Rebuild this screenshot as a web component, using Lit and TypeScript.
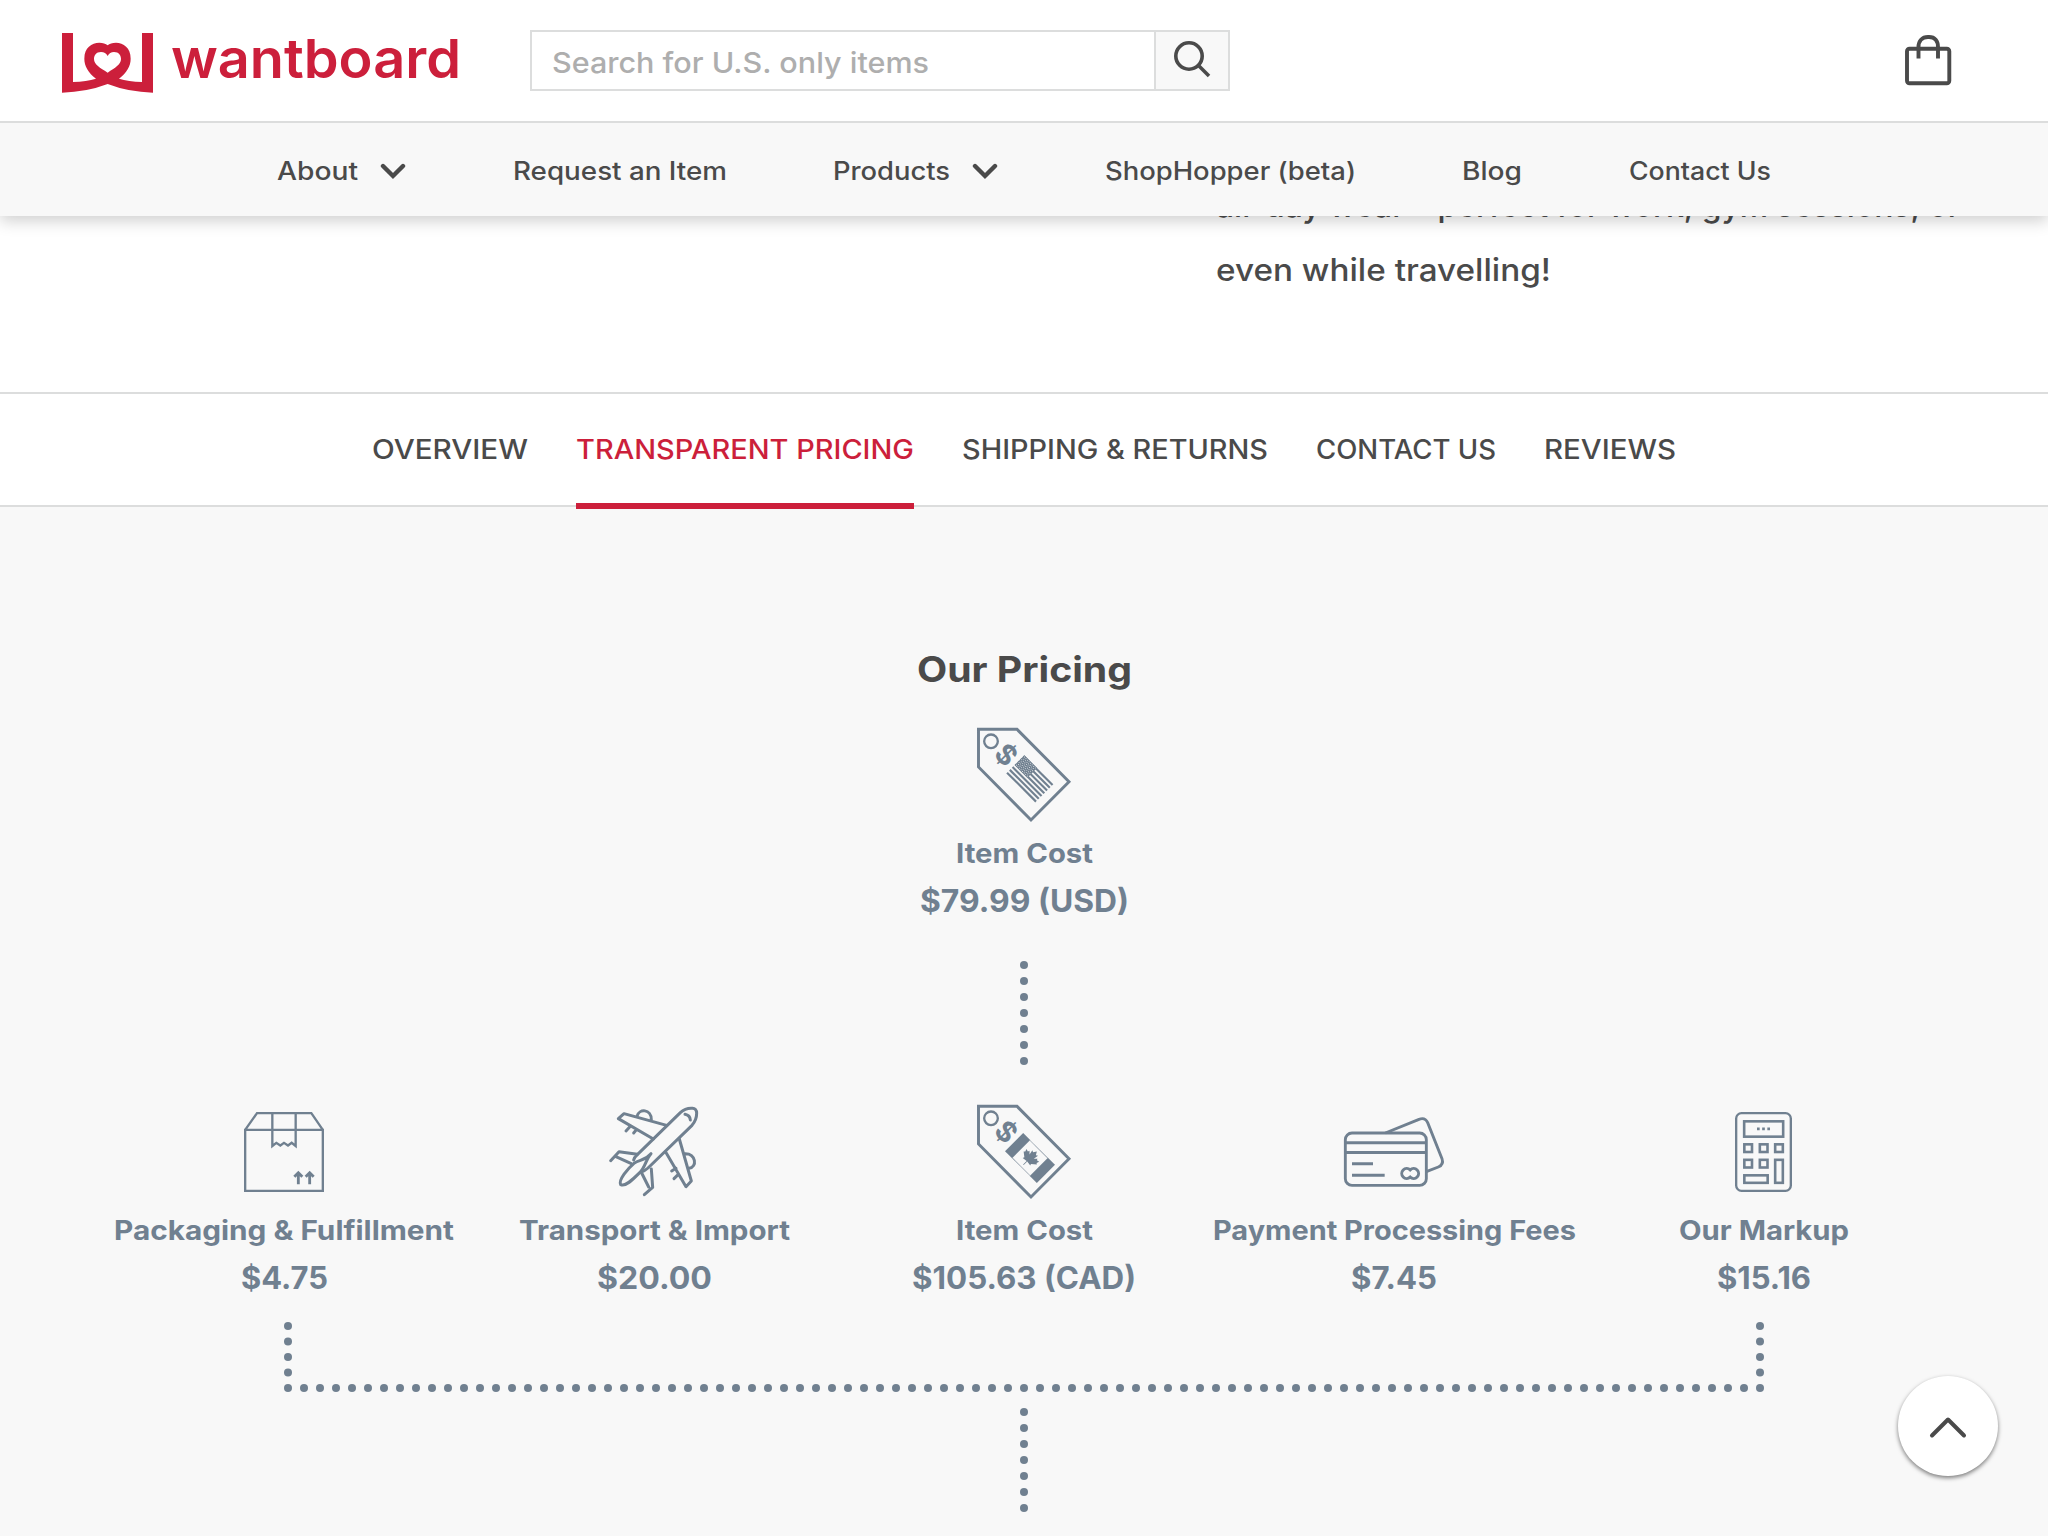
import { LitElement, html, svg, css } from "lit";
import { customElement, property } from "lit/decorators.js";

/** One line of text set to an exact measure. */
@customElement("wb-text")
class WbText extends LitElement {
  @property() text = "";
  @property({ type: Number }) measure = 100;
  @property({ type: Number }) size = 24;
  @property({ type: Number }) weight = 500;
  @property({ type: Number }) line = 48;
  @property({ type: Number }) base = 34;

  static styles = css`
    :host { display: block; flex: none; }
    .line { display: block; overflow: visible; }
    .glyphs { font-family: Inter, "Liberation Sans", sans-serif; fill: currentColor; }
  `;

  render() {
    return html`<svg class="line" width=${this.measure} height=${this.line}>
      <text class="glyphs" x="0" y=${this.base} font-size=${this.size} font-weight=${this.weight}
        textLength=${this.measure} lengthAdjust="spacingAndGlyphs">${this.text}</text>
    </svg>`;
  }
}

const tag = svg`
  <path d="M235.5 298H351L507 455L393 570L235.5 411Z" stroke-width="8.8"/>
  <circle cx="273" cy="334" r="20.5" stroke-width="7"/>
  <text class="dollar" transform="translate(319 374) rotate(45)" x="0" y="30" text-anchor="middle">$</text>`;

const stars = [0, 1, 2, 3, 4, 5, 6].flatMap((r) =>
  [0, 1, 2, 3, 4, 5, 6, 7].map((c) => [4 + c * 6.6 + (r % 2) * 3.3, 3.5 + r * 5.7]).filter(([x]) => x < 52)
);

const icons: Record<string, { box: string; art: unknown }> = {
  usd: {
    box: "192 291 360 288",
    art: svg`${tag}
      <g transform="translate(373 376) rotate(45)" class="solid">
        ${[0, 1, 2, 3, 4, 5, 6].map((i) => svg`<rect x="0" y=${i * 11.7} width="123" height="6.4"/>`)}
        <rect x="0" y="0" width="54" height="41"/>
        ${stars.map(([x, y]) => svg`<circle class="hole" cx=${x} cy=${y} r="1.4"/>`)}
      </g>`,
  },
  cad: {
    box: "192 291 360 288",
    art: svg`${tag}
      <g transform="translate(369.5 378) rotate(45)" class="solid">
        <rect x="0" y="0" width="30" height="77"/>
        <rect x="105" y="0" width="30" height="77"/>
        <rect x="30" y="0.5" width="75" height="1.6"/>
        <rect x="30" y="75" width="75" height="1.6"/>
        <path transform="translate(68 37)" d="M0-27L6-17L12-20L9-5L17-13L19-8L27-10L24-2L28 1L14 12L16 17L1.2 15L1.2 30H-1.2L-1.2 15L-16 17L-14 12L-28 1L-24-2L-27-10L-19-8L-17-13L-9-5L-12-20L-6-17Z"/>
      </g>`,
  },
  box: {
    box: "372 42 360 288",
    art: svg`<path stroke-width="7" d="M435.5 119.5H668.5V302.5H435.5ZL471 69.5H634L668.5 119.5M517 70V168L529 158.5L541 166.5L552 158.5L564 166.5L575 158.5L587 168V70"/>
      <path stroke-width="8.5" d="M595 283V248M583 260L595 248L607 260M629 283V248M617 260L629 248L641 260"/>`,
  },
  plane: {
    box: "282 42 360 288",
    art: svg`<g stroke-width="9" stroke-linecap="round" stroke-linejoin="round">
      <path d="M401 210Q402 203 412 194L541 68Q556 54 576 55Q590 54 590 70Q590 90 576 106L444 234Q434 243 424 246"/>
      <path d="M555 73Q570 76 571 90"/>
      <path d="M500 106L372 71L355 86L460 147M411 79C417 55 454 56 454 89M391 109L378 123M410 118L401 129"/>
      <path d="M538 147L574 273L558 290L497 186M555 191C588 190 593 232 567 235M528 235L515 243M535 253L522 266"/>
      <path d="M412 193L357 185L332 212M346 199L394 221M454 237L458 292L433 314M425 249L446 291"/>
      <path d="M362 284C354 270 384 235 402 220C419 208 434 213 453 191C438 207 436 232 420 247C402 265 378 291 362 284Z"/>
    </g>`,
  },
  cards: {
    box: "432 42 360 288",
    art: svg`<rect x="466" y="129" width="243" height="157" rx="20" stroke-width="8.6"/>
      <path stroke-width="9" d="M466 158H709M466 187.5H709M486 221.5H549M486 255.5H584"/>
      <path stroke-width="8.6" d="M586 129L687 88Q705 81 713 98L756 206Q762 224 745 231L709 245"/>
      <path stroke-width="9" d="M660.5 239.5A15 15 0 1 0 660.5 261.5A15 15 0 1 0 660.5 239.5Z"/>`,
  },
  calc: {
    box: "132 42 360 288",
    art: svg`<rect x="228.5" y="69.5" width="164" height="233" rx="16" stroke-width="7"/>
      <g stroke-width="7.8">
        <rect x="252.5" y="94" width="117" height="46"/>
        ${[[253, 163], [299.5, 163], [345.5, 163], [253, 209.5], [299.5, 209.5]].map(
          ([x, y]) => svg`<rect x=${x} y=${y} width="23" height="23"/>`
        )}
        <rect x="345.5" y="209.5" width="23" height="69"/>
        <rect x="253" y="256" width="70" height="22.5"/>
      </g>
      <path stroke-width="8" stroke-dasharray="8 7.5" d="M291 116.5H330"/>`,
  },
};

interface Cost { icon: string; name: string; nameW: number; price: string; priceW: number }

const costs: Cost[] = [
  { icon: "box", name: "Packaging & Fulfillment", nameW: 340, price: "$4.75", priceW: 87 },
  { icon: "plane", name: "Transport & Import", nameW: 271, price: "$20.00", priceW: 115 },
  { icon: "cad", name: "Item Cost", nameW: 137, price: "$105.63 (CAD)", priceW: 224 },
  { icon: "cards", name: "Payment Processing Fees", nameW: 363, price: "$7.45", priceW: 86 },
  { icon: "calc", name: "Our Markup", nameW: 170, price: "$15.16", priceW: 94 },
];

@customElement("wb-cost")
class WbCost extends LitElement {
  @property({ attribute: false }) cost!: Cost;

  static styles = css`
    :host { display: flex; flex-direction: column; align-items: center; color: #708090; }
    .icon { display: block; width: 120px; height: 96px; fill: none; stroke: #708090; overflow: visible; }
    .solid { fill: #708090; stroke: none; }
    .hole { fill: #f8f8f8; }
    .dollar { font: 700 84px Inter, sans-serif; fill: #708090; stroke: none; }
  `;

  render() {
    const c = this.cost;
    const i = icons[c.icon];
    return html`
      <svg class="icon" viewBox=${i.box}>${i.art}</svg>
      <wb-text .text=${c.name} .measure=${c.nameW} .size=${27} .weight=${750} .base=${39.7}></wb-text>
      <wb-text .text=${c.price} .measure=${c.priceW} .size=${31} .weight=${750} .base=${40.7}></wb-text>
    `;
  }
}

const nav = [
  { text: "About", w: 81, menu: true },
  { text: "Request an Item", w: 214 },
  { text: "Products", w: 117, menu: true },
  { text: "ShopHopper (beta)", w: 251 },
  { text: "Blog", w: 60 },
  { text: "Contact Us", w: 142 },
];

const tabs = [
  { text: "OVERVIEW", w: 156 },
  { text: "TRANSPARENT PRICING", w: 338, on: true },
  { text: "SHIPPING & RETURNS", w: 306 },
  { text: "CONTACT US", w: 180 },
  { text: "REVIEWS", w: 132 },
];

const column = html`<svg class="dots" width="8" height="104">
  ${[0, 1, 2, 3, 4, 5, 6].map((i) => svg`<circle cx="4" cy=${4 + i * 16} r="4"/>`)}
</svg>`;

@customElement("app-root")
class AppRoot extends LitElement {
  static styles = css`
    :host { display: block; width: 2048px; height: 1536px; overflow: hidden; position: relative; background: #fff; color: #4a4a4a; }
    .head { position: relative; z-index: 2; box-shadow: 0 5px 15px rgba(0, 0, 0, 0.19); }
    .bar { display: flex; height: 121px; background: #fff; border-bottom: 2px solid #dcdddd; align-items: flex-start; }
    .brand { display: flex; width: 468px; padding-left: 62px; color: #cc1f3b; box-sizing: border-box; padding-top: 33px; gap: 18px; margin-right: 62px; }
    .mark { display: block; width: 91px; height: 60px; fill: #cc1f3b; flex: none; }
    .word { margin-top: -10px; }
    .search { display: flex; width: 700px; height: 61px; margin-top: 30px; border: 2px solid #dcdddd; box-sizing: border-box; }
    .field { flex: 1; padding-left: 20px; color: #aeaeae; }
    .go { width: 74px; border-left: 2px solid #dcdddd; background: #f8f8f8; box-sizing: border-box; padding: 7px 0 0 16px; }
    .line-icon { display: block; fill: none; stroke: #4a4a4a; }
    .bag { margin: 34px 96px 0 auto; }
    .nav { display: flex; justify-content: space-between; height: 93px; padding: 0 277px; background: #f8f8f8; }
    .item { display: flex; gap: 22px; }
    .item svg { margin-top: 39px; }
    .story { height: 176px; padding-left: 1216px; overflow: hidden; box-sizing: border-box; }
    .first { margin-top: -40px; }
    .tabs { display: flex; justify-content: center; gap: 48px; height: 111px; border-top: 2px solid #dcdddd; border-bottom: 2px solid #dcdddd; }
    .tab { height: 109px; border-bottom: 6px solid transparent; }
    .on { color: #cc1f3b; border-color: #cc1f3b; position: relative; }
    .pricing { display: flex; flex-direction: column; align-items: center; height: 1029px; background: #f8f8f8; padding-top: 140px; box-sizing: border-box; }
    .top { margin-top: 32px; }
    .dots { display: block; fill: #708090; flex: none; }
    .d1 { margin-top: 42px; }
    .row { display: grid; grid-template-columns: repeat(5, 370px); margin-top: 39px; }
    .bracket { margin: 26px 0 16px; }
    .up { position: absolute; right: 50px; bottom: 60px; width: 100px; height: 100px; border-radius: 50%; background: #fff; box-shadow: 0 2px 4px rgba(0, 0, 0, 0.5); display: flex; align-items: center; justify-content: center; }
    .up svg { margin-top: 2px; }
  `;

  render() {
    const bracket = [
      ...Array.from({ length: 93 }, (_, i) => [4 + i * 16, 66]),
      ...[4, 19.5, 35, 50.5].flatMap((y) => [[4, y], [1476, y]]),
    ];
    return html`
      <header class="head">
        <div class="bar">
          <div class="brand">
            <svg class="mark" viewBox="66 69 273 180">
              <path fill-rule="evenodd" d="M66 69H99V216Q140 214 168 206C145 188 133 168 133 146C133 112 155 99 178 98Q194 98 203 106Q211 98 228 98C250 99 272 112 272 146C272 168 260 188 237 206Q265 214 306 216V69H339V248Q265 246 203 222Q140 246 66 248ZM203 138Q197 126 183 126C168 126 162 137 162 147C162 164 180 173 203 188C225 173 243 164 243 147C243 137 237 126 222 126Q209 126 203 138Z"/>
            </svg>
            <wb-text class="word" .text=${"wantboard"} .measure=${290} .size=${54} .weight=${600} .line=${60} .base=${54.7}></wb-text>
          </div>
          <div class="search">
            <div class="field">
              <wb-text .text=${"Search for U.S. only items"} .measure=${377} .size=${29} .line=${57} .base=${40.7}></wb-text>
            </div>
            <div class="go">
              <svg class="line-icon" width="42" height="42" stroke-width="3.6">
                <circle cx="17" cy="17" r="13.2"/><path d="M26 26L37 37"/>
              </svg>
            </div>
          </div>
          <svg class="line-icon bag" width="48" height="53" stroke-width="3.9">
            <rect x="3" y="14.7" width="42.3" height="34.6" rx="2.5"/>
            <path d="M14.5 24.5V13C14.5 7 18 3 24 3H25C31 3 34 7 34 13V24.5"/>
          </svg>
        </div>
        <nav class="nav">
          ${nav.map((n) => html`<div class="item">
            <wb-text .text=${n.text} .measure=${n.w} .size=${25} .line=${90} .base=${57}></wb-text>
            ${n.menu
              ? html`<svg class="line-icon" width="26" height="18" stroke-width="4.4" stroke-linecap="round"><path d="M3 4L13 14L23 4"/></svg>`
              : ""}
          </div>`)}
        </nav>
      </header>
      <section class="story">
        <wb-text class="first" .text=${"all-day wear – perfect for work, gym sessions, or"} .measure=${744} .size=${31} .line=${64} .base=${41}></wb-text>
        <wb-text .text=${"even while travelling!"} .measure=${335} .size=${31} .line=${64} .base=${41}></wb-text>
      </section>
      <nav class="tabs">
        ${tabs.map((t) => html`<div class="tab ${t.on ? "on" : ""}">
          <wb-text .text=${t.text} .measure=${t.w} .size=${27} .line=${90} .base=${65}></wb-text>
        </div>`)}
      </nav>
      <main class="pricing">
        <wb-text .text=${"Our Pricing"} .measure=${215} .size=${35} .weight=${750} .base=${34.7}></wb-text>
        <wb-cost class="top" .cost=${{ icon: "usd", name: "Item Cost", nameW: 137, price: "$79.99 (USD)", priceW: 209 }}></wb-cost>
        <div class="d1">${column}</div>
        <div class="row">${costs.map((c) => html`<wb-cost .cost=${c}></wb-cost>`)}</div>
        <svg class="dots bracket" width="1480" height="70">
          ${bracket.map(([x, y]) => svg`<circle cx=${x} cy=${y} r="4"/>`)}
        </svg>
        ${column}
      </main>
      <div class="up">
        <svg class="line-icon" width="40" height="24" stroke-width="4" stroke-linecap="round" stroke-linejoin="round"><path d="M4 20.5L20 4.5L36 20.5"/></svg>
      </div>
    `;
  }
}
